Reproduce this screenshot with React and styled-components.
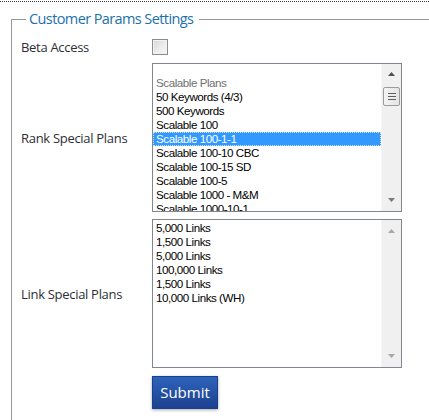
import React from 'react';
import styled, { createGlobalStyle } from 'styled-components';

const GlobalStyle = createGlobalStyle`
  html, body {
    margin: 0;
    padding: 0;
    background: #fff;
    overflow: hidden;
  }
  body {
    font-family: "Open Sans", "Noto Sans", sans-serif;
  }
`;

const Page = styled.div`
  width: 429px;
  height: 420px;
  overflow: hidden;
  padding-top: 1px;
  box-sizing: border-box;
`;

const TopRule = styled.div`
  border-top: 1px dotted #3a3a3a;
`;

const Fieldset = styled.fieldset`
  margin: 6px -40px 0 11px;
  padding: 8px 0 30px 9px;
  border: 1px solid #979797;
  min-width: 0;
`;

const Legend = styled.legend`
  margin-left: 5px;
  padding: 0 6px 0 3px;
  color: #1d70aa;
  font-size: 14.5px;
  letter-spacing: -0.6px;
  line-height: 22px;
`;

const Form = styled.div`
  display: grid;
  grid-template-columns: 131px 250px;
  row-gap: 7px;
  align-items: center;
`;

const Label = styled.label`
  font-size: 13px;
  letter-spacing: -0.3px;
  line-height: 18px;
  color: #2e2e36;
`;

const Checkbox = styled.span`
  display: block;
  width: 14px;
  height: 14px;
  border: 1px solid #8c8c8c;
  background: linear-gradient(135deg, #d6d6d6 0%, #ececec 55%, #f7f7f7 100%);
  box-shadow: inset 0 0 0 1px #f2f2f2;
`;

const ListBox = styled.div`
  display: flex;
  width: 250px;
  height: 149px;
  box-sizing: border-box;
  border: 1px solid #82868e;
  background: #fff;
`;

const Options = styled.div`
  flex: 1;
  overflow: hidden;
  padding-top: ${p => p.$offset}px;
  font-family: "Liberation Sans", Arial, sans-serif;
  font-size: 11.6px;
  letter-spacing: -0.45px;
`;

const Option = styled.div`
  height: 14px;
  line-height: 14px;
  padding-left: 3px;
  white-space: nowrap;
  box-sizing: border-box;
  color: ${p => (p.$group ? '#707070' : p.$selected ? '#fff' : '#000')};
  background: ${p => (p.$selected ? '#3399ff' : 'transparent')};
  outline: ${p => (p.$selected ? '1px dotted #c8e2ff' : 'none')};
  outline-offset: -1px;
`;

const Scrollbar = styled.div`
  width: 19px;
  flex: none;
  display: flex;
  flex-direction: column;
  background: #f0f0f0;
  border-left: 1px solid #f6f6f6;
`;

const ArrowButton = styled.div`
  height: ${p => p.$h}px;
  flex: none;
  display: flex;
  align-items: center;
  justify-content: center;
`;

const Thumb = styled.div`
  margin: 3px 1px 0 1px;
  height: 17px;
  border: 1px solid #9c9c9c;
  border-radius: 2px;
  background: linear-gradient(90deg, #f4f4f4, #e4e4e4);
  display: flex;
  flex-direction: column;
  align-items: center;
  justify-content: center;
  gap: 2px;
`;

const Grip = styled.span`
  width: 8px;
  height: 1px;
  background: #5e5e5e;
`;

const Spacer = styled.div`
  flex: 1;
`;

const SubmitButton = styled.button`
  width: 66px;
  height: 33px;
  margin-top: 1px;
  padding: 0 0 2px;
  border: 1px solid #1b3f8c;
  background: linear-gradient(#2e63bb, #1c418f);
  color: #fff;
  font-family: "Open Sans", "Noto Sans", sans-serif;
  font-size: 15px;
  box-shadow: 0 1px 3px rgba(0, 0, 0, 0.35);
  cursor: pointer;
`;

const Arrow = ({ up, color }) => (
  <svg width="7" height="4" viewBox="0 0 7 4">
    <polygon points={up ? '0,4 7,4 3.5,0' : '0,0 7,0 3.5,4'} fill={color} />
  </svg>
);

const rankPlans = [
  '50 Keywords (4/3)',
  '500 Keywords',
  'Scalable 100',
  'Scalable 100-1-1',
  'Scalable 100-10 CBC',
  'Scalable 100-15 SD',
  'Scalable 100-5',
  'Scalable 1000 - M&M',
  'Scalable 1000-10-1',
];

const linkPlans = [
  '5,000 Links',
  '1,500 Links',
  '5,000 Links',
  '100,000 Links',
  '1,500 Links',
  '10,000 Links (WH)',
];

export default function App() {
  return (
    <Page>
      <GlobalStyle />
      <TopRule />
      <Fieldset>
        <Legend>Customer Params Settings</Legend>
        <Form>
          <Label>Beta Access</Label>
          <Checkbox />

          <Label>Rank Special Plans</Label>
          <ListBox>
            <Options $offset={12}>
              <Option $group>Scalable Plans</Option>
              {rankPlans.map(p => (
                <Option key={p} $selected={p === 'Scalable 100-1-1'}>{p}</Option>
              ))}
            </Options>
            <Scrollbar>
              <ArrowButton $h={20}><Arrow up color="#505050" /></ArrowButton>
              <Thumb>
                <Grip />
                <Grip />
                <Grip />
              </Thumb>
              <Spacer />
              <ArrowButton $h={22}><Arrow color="#7a7a7a" /></ArrowButton>
            </Scrollbar>
          </ListBox>

          <Label>Link Special Plans</Label>
          <ListBox>
            <Options $offset={1}>
              {linkPlans.map((p, i) => (
                <Option key={i}>{p}</Option>
              ))}
            </Options>
            <Scrollbar>
              <ArrowButton $h={22}><Arrow up color="#a8a8a8" /></ArrowButton>
              <Spacer />
              <ArrowButton $h={22}><Arrow color="#a8a8a8" /></ArrowButton>
            </Scrollbar>
          </ListBox>

          <span />
          <div>
            <SubmitButton>Submit</SubmitButton>
          </div>
        </Form>
      </Fieldset>
    </Page>
  );
}
